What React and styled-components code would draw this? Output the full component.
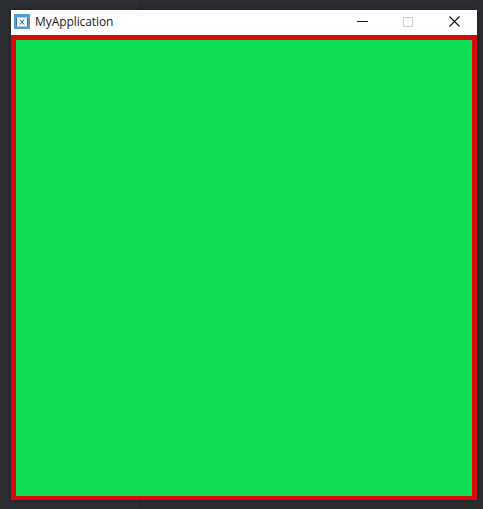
import styled, { createGlobalStyle } from "styled-components";

const GlobalStyle = createGlobalStyle`
  html,
  body {
    margin: 0;
    padding: 0;
    height: 100%;
    overflow: hidden;
  }
`;

const Desktop = styled.div`
  width: 483px;
  height: 509px;
  box-sizing: border-box;
  padding: 10px 6px 9px 11px;
  background: linear-gradient(to right, #2c2e32 140px, #232529 140px, #232529 141px, #2b2d31 141px);
`;

const Window = styled.div`
  display: flex;
  flex-direction: column;
  height: 100%;
  box-shadow: 0 0 5px rgba(0, 0, 0, 0.35);
`;

const TitleBar = styled.div`
  display: flex;
  align-items: center;
  box-sizing: border-box;
  height: 25px;
  flex: none;
  background: #fff;
  padding: 0 0 2px 3px;
`;

const AppIcon = styled.svg`
  width: 16px;
  height: 16px;
  flex: none;
`;

const Title = styled.span`
  margin-left: 5px;
  flex: 1;
  font-family: "Open Sans", "Liberation Sans", Arial, sans-serif;
  font-size: 12px;
  letter-spacing: -0.08px;
  color: #1a1a1a;
`;

const Controls = styled.div`
  display: flex;
  height: 100%;
`;

const ControlButton = styled.div`
  width: 46px;
  display: flex;
  align-items: center;
  justify-content: center;
`;

const Content = styled.div`
  flex: 1;
  box-sizing: border-box;
  background: #0fdd56;
  border: solid #d60c0c;
  border-width: 5px 5px 4px 5px;
`;

export default function App() {
  return (
    <>
      <GlobalStyle />
      <Desktop>
        <Window>
          <TitleBar>
            <AppIcon viewBox="0 0 16 16">
              <rect width="16" height="15" fill="#4f9fd6" />
              <rect x="1.5" y="3.5" width="13" height="9" fill="#f2f6f9" />
              <rect x="1.5" y="3.5" width="1.5" height="9" fill="#2f6d9c" />
              <rect x="13" y="3.5" width="1.5" height="9" fill="#2f6d9c" />
              <path d="M6 5.5l4 5M10 5.5l-4 5" stroke="#3f6480" strokeWidth="1" fill="none" />
            </AppIcon>
            <Title>MyApplication</Title>
            <Controls>
              <ControlButton>
                <svg width="11" height="11" viewBox="0 0 11 11">
                  <path d="M0 5.5h11" stroke="#111" strokeWidth="1" />
                </svg>
              </ControlButton>
              <ControlButton>
                <svg width="10" height="10" viewBox="0 0 10 10">
                  <rect x="0.5" y="0.5" width="9" height="9" fill="none" stroke="#cfcfcf" strokeWidth="1" />
                </svg>
              </ControlButton>
              <ControlButton>
                <svg width="11" height="11" viewBox="0 0 11 11">
                  <path d="M0.5 0.5l10 10M10.5 0.5l-10 10" stroke="#111" strokeWidth="1.1" />
                </svg>
              </ControlButton>
            </Controls>
          </TitleBar>
          <Content />
        </Window>
      </Desktop>
    </>
  );
}
